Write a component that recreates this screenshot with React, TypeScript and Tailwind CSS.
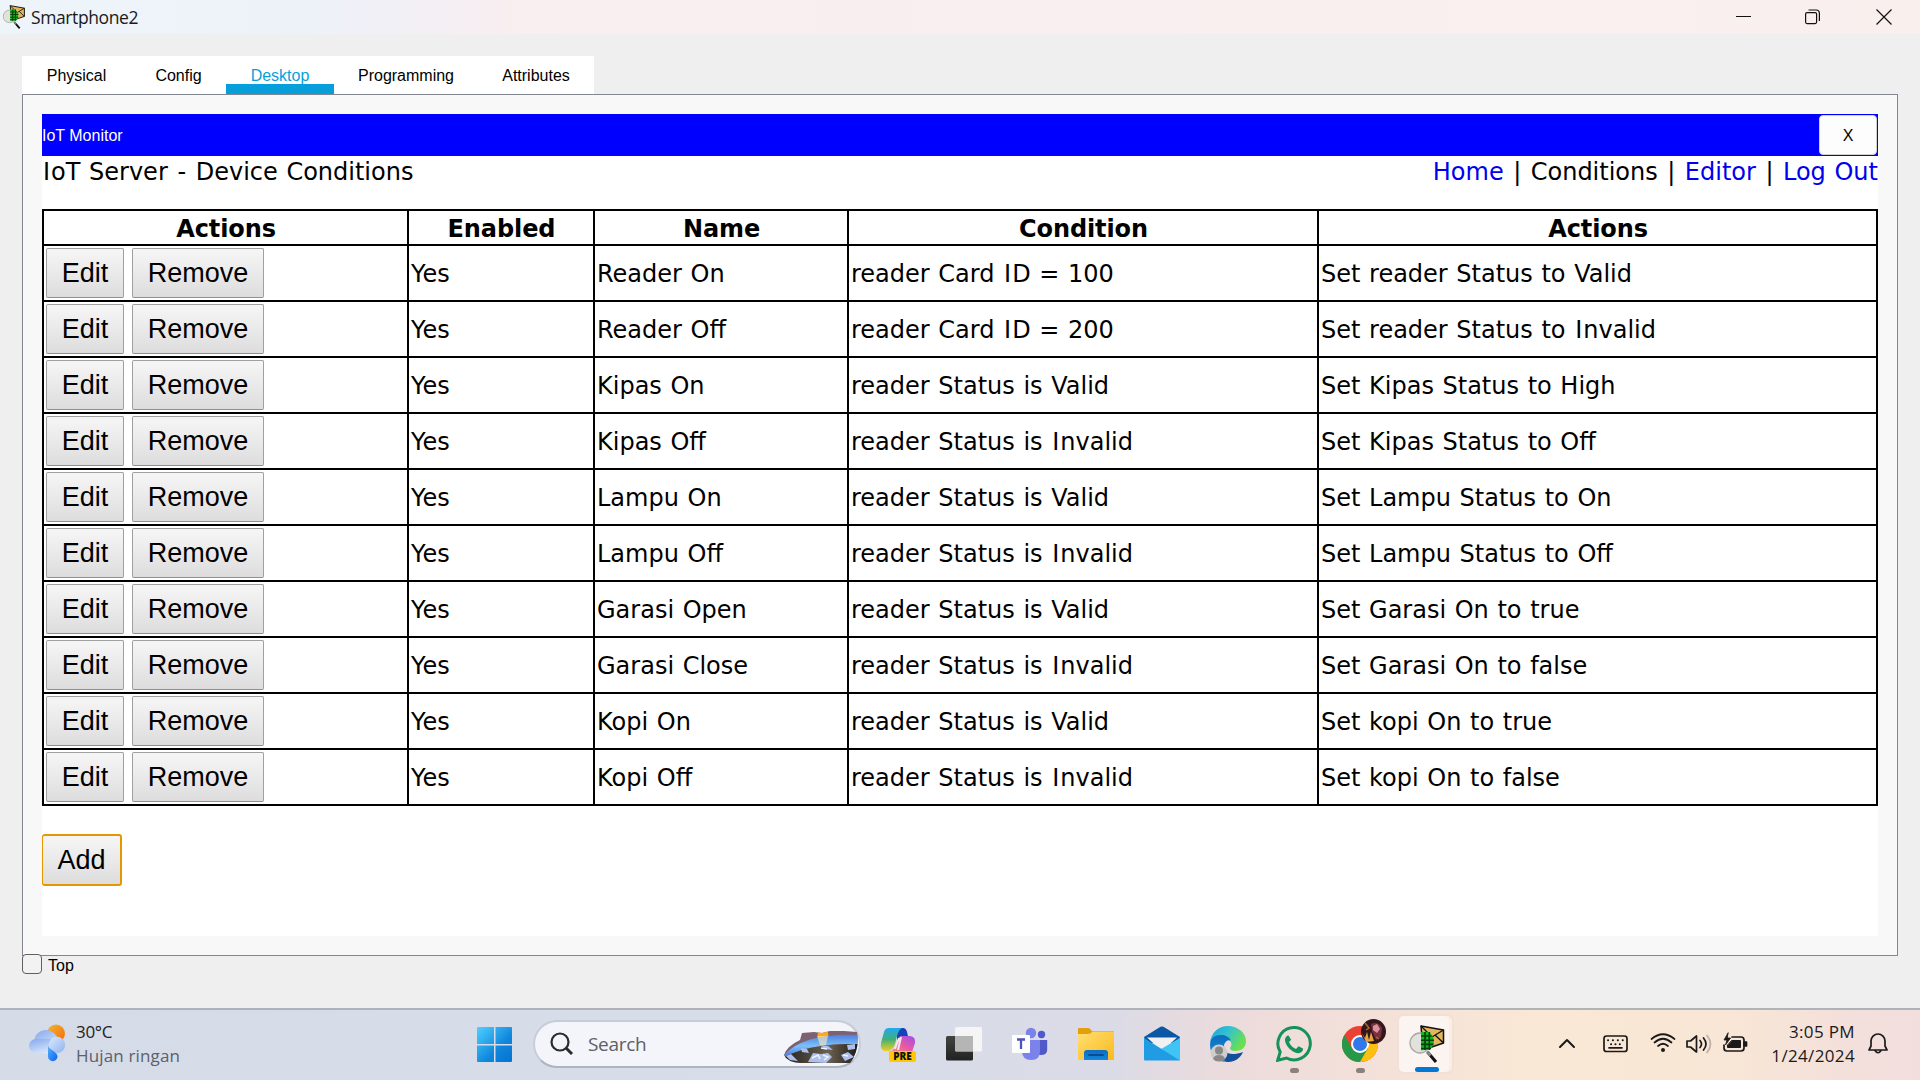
import React from 'react';

const rows = [
  ['Reader On', 'reader Card ID = 100', 'Set reader Status to Valid'],
  ['Reader Off', 'reader Card ID = 200', 'Set reader Status to Invalid'],
  ['Kipas On', 'reader Status is Valid', 'Set Kipas Status to High'],
  ['Kipas Off', 'reader Status is Invalid', 'Set Kipas Status to Off'],
  ['Lampu On', 'reader Status is Valid', 'Set Lampu Status to On'],
  ['Lampu Off', 'reader Status is Invalid', 'Set Lampu Status to Off'],
  ['Garasi Open', 'reader Status is Valid', 'Set Garasi On to true'],
  ['Garasi Close', 'reader Status is Invalid', 'Set Garasi On to false'],
  ['Kopi On', 'reader Status is Valid', 'Set kopi On to true'],
  ['Kopi Off', 'reader Status is Invalid', 'Set kopi On to false'],
];

const tabs = [
  { name: 'Physical', width: 'w-[109px]' },
  { name: 'Config', width: 'w-[95px]' },
  { name: 'Desktop', width: 'w-[108px]' },
  { name: 'Programming', width: 'w-[144px]' },
  { name: 'Attributes', width: 'w-[116px]' },
];

const webButton =
  'flex h-[50px] items-center justify-center rounded-[2px] border border-[#a0a0a0] border-b-[#8f8f8f] bg-linear-to-b from-[#f6f6f6] to-[#dddddd] font-["Liberation_Sans",sans-serif] text-[27px] leading-none text-black';

/* Text with slightly wider capital I, as in a screen face with slab I. */
function WideText({ text }: { text: string }) {
  return (
    <>
      {text.split(/(I|-)/).map((part, i) =>
        part === 'I' || part === '-' ? (
          <span key={i} className="px-[1px]">{part}</span>
        ) : (
          part
        ),
      )}
    </>
  );
}

function TracerIcon({ className }: { className: string }) {
  return (
    <svg viewBox="0 0 36 38" className={className}>
      <path d="M12 1 34.500 5V18L14 25Z" fill="#e2b45c" stroke="#111" strokeWidth="1.500" strokeLinejoin="round" />
      <path d="M12 1 23 12 34.500 5M34.500 18 26 10" fill="none" stroke="#111" strokeWidth="1.300" />
      <circle cx="11" cy="18" r="10" fill="#e3e1dc" stroke="#a8a8a4" strokeWidth="1.300" />
      <path d="M12 7H20Q26 12 24.500 19L22 24 12 25.500Z" fill="#14b51f" />
      <path d="M12 11H22.500M12 15.200H25M12 19.400H24.500M12 23.500H22M16 7V25M20.300 7V25" stroke="#033f08" strokeWidth="1.600" />
      <path d="m18.500 27 8.500 10" stroke="#111" strokeWidth="3" />
      <path d="m18 26.500 3.500 4" stroke="#888" strokeWidth="2.800" />
    </svg>
  );
}

function TitleBar() {
  return (
    <header className="flex h-[34px] shrink-0 items-center bg-[linear-gradient(to_right,#eef5f9_0%,#edf2f9_16%,#f3eff5_22%,#f9eef0_27%,#f9f0ee_100%)] pl-[2px]">
      <TracerIcon className="h-[24px] w-[24px]" />
      <span className='ml-[5px] pt-px font-["Open_Sans",sans-serif] text-[17.500px] tracking-[-0.400px] text-[#1a1a1a]'>Smartphone2</span>
      <div className="ml-auto flex items-center pr-[28px]">
        <svg viewBox="0 0 16 16" className="h-[16px] w-[16px]" fill="none" stroke="#111"><path d="M0 7.500H15" /></svg>
        <svg viewBox="0 0 16 16" className="ml-[53px] h-[16px] w-[16px]" fill="none" stroke="#111" strokeWidth="1.200">
          <rect x=".6" y="3.600" width="11" height="11" rx="1.500" />
          <path d="M3.500 1H11Q14.400 1 14.400 4.500V12" />
        </svg>
        <svg viewBox="0 0 16 16" className="ml-[55px] h-[16px] w-[16px]" fill="none" stroke="#111" strokeWidth="1.200"><path d="m.5.5 15 15m0-15-15 15" /></svg>
      </div>
    </header>
  );
}

function Monitor() {
  return (
    <main className="flex h-[862px] w-[1876px] flex-col border border-[#828790] bg-[#f8f8f8] px-[19px] pt-[19px]">
      <div className="flex h-[42px] items-center justify-between bg-[#0000ff] pr-px">
        <span className='pt-[2px] font-["Liberation_Sans",sans-serif] text-[16px] text-white'>IoT Monitor</span>
        <button className='flex h-[40px] w-[58px] items-center justify-center rounded-[4px] border border-[#d0d0d0] bg-[#fdfdfd] pt-[2px] font-["Liberation_Sans",sans-serif] text-[16px] text-black'>X</button>
      </div>
      <div className='h-[780px] bg-white font-["DejaVu_Sans",sans-serif] text-[24px] text-black [word-spacing:1px]'>
        <div className="flex h-[53px] justify-between leading-[33px]">
          <span><WideText text="IoT Server - Device Conditions" /></span>
          <nav className="flex gap-[9.500px]">
            <a className="text-[#0000ee]">Home</a><span>|</span><span>Conditions</span><span>|</span>
            <a className="text-[#0000ee]">Editor</a><span>|</span><a className="text-[#0000ee]">Log Out</a>
          </nav>
        </div>
        <table className="w-[1836px] table-fixed border-collapse border-2 border-black">
          <colgroup>
            <col className="w-[365px]" /><col className="w-[186px]" /><col className="w-[254px]" /><col className="w-[470px]" /><col />
          </colgroup>
          <thead>
            <tr className="h-[35px]">
              {['Actions', 'Enabled', 'Name', 'Condition', 'Actions'].map((h, i) => (
                <th key={i} className="border-2 border-black p-0 pt-[2px] pl-px leading-[30px] font-bold tracking-[-0.100px]">{h}</th>
              ))}
            </tr>
          </thead>
          <tbody>
            {rows.map((r) => (
              <tr key={r[0]} className="h-[56px]">
                <td className="border-2 border-black p-0 pl-[2px]">
                  <div className="flex gap-[8px]">
                    <button className={webButton + ' w-[78px]'}>Edit</button>
                    <button className={webButton + ' w-[132px]'}>Remove</button>
                  </div>
                </td>
                <td className="border-2 border-black p-0 pt-[2px] pl-[2px] leading-[30px]">Yes</td>
                {r.map((c) => (
                  <td key={c} className="border-2 border-black p-0 pt-[2px] pl-[2px] leading-[30px] whitespace-nowrap"><WideText text={c} /></td>
                ))}
              </tr>
            ))}
          </tbody>
        </table>
        <button className='mt-[28px] flex h-[52px] w-[80px] items-center justify-center rounded-[3px] border-2 border-l border-[#e59700] bg-linear-to-b from-[#f6f6f6] to-[#dddddd] font-["Liberation_Sans",sans-serif] text-[27px] leading-none'>Add</button>
      </div>
    </main>
  );
}

function WeatherIcon() {
  return (
    <svg viewBox="0 0 38 38" className="h-[38px] w-[38px]">
      <defs>
        <linearGradient id="sun" x2="1" y2="1"><stop stopColor="#f3b62c" /><stop offset="1" stopColor="#f36a0f" /></linearGradient>
        <linearGradient id="cloud" x2=".6" y2="1"><stop stopColor="#84a7ee" /><stop offset="1" stopColor="#dbe8fb" /></linearGradient>
        <linearGradient id="cloud2" x2="1" y2="1"><stop stopColor="#dce9fb" /><stop offset="1" stopColor="#8fb2f0" /></linearGradient>
        <linearGradient id="drop" x2="1" y2="1"><stop stopColor="#58b3fb" /><stop offset="1" stopColor="#0a62ef" /></linearGradient>
      </defs>
      <circle cx="28" cy="9.500" r="9" fill="url(#sun)" />
      <circle cx="18" cy="18" r="12" fill="url(#cloud)" />
      <rect x="1" y="15" width="30" height="14" rx="7" fill="url(#cloud)" />
      <circle cx="29" cy="21" r="8.200" fill="url(#cloud2)" />
      <path d="M20 22c2 4 9.500 6 9.500 10.500a4.700 4.700 0 0 1-9.500 0Z" fill="url(#drop)" />
    </svg>
  );
}

function SearchArt() {
  return (
    <svg viewBox="0 0 74 34" className="h-[34px] w-[74px]">
      <defs>
        <linearGradient id="lake" x2="0" y2="1"><stop stopColor="#4f7fe0" /><stop offset=".5" stopColor="#7cc0fa" /><stop offset="1" stopColor="#4776dd" /></linearGradient>
        <linearGradient id="shore" x2="1"><stop stopColor="#25221f" /><stop offset=".6" stopColor="#6b6150" /><stop offset="1" stopColor="#1d1a18" /></linearGradient>
        <clipPath id="artClip"><path d="M0 25Q3 16 16 10L18 3 30 2 38 3 46 1 60 1 73 2Q76 20 66 33H17Q3 32 0 25Z" /></clipPath>
      </defs>
      <g clipPath="url(#artClip)">
        <rect width="74" height="34" fill="#7c6172" />
        <circle cx="39" cy="5" r="5.500" fill="#ffa818" />
        <path d="M0 25Q20 3 74 5V14Q28 13 0 27Z" fill="url(#lake)" />
        <path d="M33 6h11l-2 9h-6Z" fill="#ffeebd" opacity=".6" />
        <path d="M0 27Q28 13 74 14V34H0Z" fill="url(#shore)" />
        <path d="m2 26 5-2 7 7-8-1Zm15-8 6 1 2 4-7-1Zm7 14 5-9 8 1 7-1 4 4-6 6Zm12-17 8 1 5 4-8-1Zm21 10 7-3 6 5-9 4Zm6-10 8-1v5l-7 1Z" fill="#aebfec" />
        <path d="m28 28 6-3 2 4m3-4 5 2-4 3m19-5 5 1M37 18l6 1" stroke="#f0f4ff" strokeWidth="1.500" fill="none" />
      </g>
    </svg>
  );
}

function CopilotIcon() {
  return (
    <svg viewBox="0 0 36 36" className="h-[36px] w-[36px]">
      <defs>
        <linearGradient id="cpA" x2="0" y2="1"><stop stopColor="#21a9ee" /><stop offset=".5" stopColor="#42b078" /><stop offset="1" stopColor="#f1cf1d" /></linearGradient>
        <linearGradient id="cpB" x1="1" x2="0" y2="1"><stop stopColor="#9b50ee" /><stop offset=".5" stopColor="#e758a5" /><stop offset="1" stopColor="#ff9264" /></linearGradient>
      </defs>
      <path d="M17 1H23Q26 1 27 5L28 9H23Q20 9 19 12L17 18Z" fill="#1740bd" />
      <path d="M9 1H22Q19 2 17 9L15 17Q13 23 8 24H4Q0 22 1 16L4 5Q5 1 9 1Z" fill="url(#cpA)" />
      <path d="M22 9H30Q36 10 35 16L32 25H8Q14 24 16 18L18 12Q19 9 22 9Z" fill="url(#cpB)" />
      <path d="M19 11 15 22M21 10 18 23" stroke="#f3e9ed" strokeWidth="2" />
      <rect x="9" y="24" width="27" height="11" rx="2.500" fill="#ffc800" />
      <text x="22.500" y="33" textAnchor="middle" fontFamily="Open Sans, sans-serif" fontSize="10" fontWeight="800" fill="#111">PRE</text>
    </svg>
  );
}

function TaskViewIcon() {
  return (
    <svg viewBox="0 0 36 36" className="h-[36px] w-[36px]">
      <defs>
        <linearGradient id="tvD" x2="0" y2="1"><stop stopColor="#434341" /><stop offset="1" stopColor="#222" /></linearGradient>
      </defs>
      <rect y="10" width="27" height="24.500" rx="1.500" fill="url(#tvD)" />
      <rect x="9" y="1" width="27" height="24.500" rx="1.500" fill="#f5f5f6" />
      <path d="M9 10H27V25H9Z" fill="#b5b5b5" />
    </svg>
  );
}

function TeamsIcon() {
  return (
    <svg viewBox="0 0 36 36" className="h-[36px] w-[36px]">
      <circle cx="29.500" cy="8.500" r="3.700" fill="#5059c9" />
      <circle cx="19" cy="7" r="5.200" fill="#7b83eb" />
      <path d="M26 14H35.200V24Q35 29 29 29 24 29 24 24Z" fill="#5059c9" />
      <path d="M10 14H28V25Q28 34 19.500 34 10 34 10 25Z" fill="#7b83eb" />
      <rect y="9" width="18" height="18" rx="1" fill="#fff" />
      <path d="M5 13.500H13M9 13.500V23" stroke="#4b53bc" strokeWidth="2.300" />
    </svg>
  );
}

function FolderIcon() {
  return (
    <svg viewBox="0 0 36 36" className="h-[36px] w-[36px]">
      <defs>
        <linearGradient id="fo" x2="1" y2="1"><stop stopColor="#ffdf74" /><stop offset="1" stopColor="#fbb91b" /></linearGradient>
        <linearGradient id="fb" x2="0" y2="1"><stop stopColor="#0f6cc4" /><stop offset="1" stopColor="#1187db" /></linearGradient>
      </defs>
      <path d="M0 3Q0 2 1 2H10Q12 2 13 4L14 5H35Q36 5 36 6V12H0Z" fill="#e3a008" />
      <path d="M0 8H10Q12 8 13 7L14.500 5.600H36V33Q36 34 35 34H1Q0 34 0 33Z" fill="url(#fo)" />
      <path d="M6 34V27Q6 24 9 24H27Q30 24 30 27V34Z" fill="url(#fb)" />
      <path d="M11 29H25" stroke="#0b4b91" strokeWidth="1.800" strokeLinecap="round" />
    </svg>
  );
}

function MailIcon() {
  return (
    <svg viewBox="0 0 36 36" className="h-[36px] w-[36px]">
      <path d="M0 11 16.500.8Q18 0 19.500.8L36 11 34 17H2Z" fill="#0a58a5" />
      <path d="M3 11.500H33L18 25Z" fill="#f1f1f1" />
      <path d="M36 12V33.500Q36 34.500 35 34.500L17 23Z" fill="#3fc5f5" />
      <path d="M0 12 36 34.500H1Q0 34.500 0 33.500Z" fill="#1f9ce4" />
    </svg>
  );
}

function EdgeIcon() {
  return (
    <svg viewBox="0 0 36 36" className="h-[36px] w-[36px]">
      <defs>
        <linearGradient id="eA" x2="1" y2=".5"><stop stopColor="#1a9fe0" /><stop offset=".5" stopColor="#35c2cf" /><stop offset="1" stopColor="#6be04d" /></linearGradient>
        <linearGradient id="eB" x2="0" y2="1"><stop stopColor="#0b6cba" /><stop offset="1" stopColor="#1d97e5" /></linearGradient>
      </defs>
      <path d="M0 17C1 7 8 0 18 0 28 0 36 7 36 15 36 22 31 25 25 25 22 25 20 24 20 22 22 20 22 17 20 15Q13 8 0 17Z" fill="url(#eA)" />
      <path d="M0 18Q1 9 11 9 18 9 21 14.500 16 13 14 19 13 31 29 28 24 36 18 36 0 36 0 18Z" fill="url(#eB)" />
      <path d="M14 19C12 26 19 31 33 26 30 33 24 36 17 36 10 33 8 23 14 19Z" fill="#124f9b" />
      <circle cx="9" cy="27" r="8.500" fill="#cfcdca" />
      <circle cx="9" cy="24.500" r="4" fill="#8a8886" />
      <path d="M3 33Q4 29 9 29T15 33Q13 35.500 9 35.500T3 33Z" fill="#8a8886" />
    </svg>
  );
}

function WhatsAppIcon() {
  return (
    <svg viewBox="0 0 36 36" className="h-[36px] w-[36px]">
      <path d="M1.700 34.300 4.200 26A16.200 16.200 0 1 1 10.500 32Z" fill="none" stroke="#17915a" strokeWidth="3" />
      <path d="M12.500 9.500C11 9.500 8.800 11.500 9 14.500 9.500 20 16 26.500 22 27.200 25 27.400 27.300 25 27 22.500L22.500 20.300 20 23Q15 21 13 16L15.200 13.800Z" fill="#17915a" />
    </svg>
  );
}

function ChromeIcon() {
  return (
    <svg viewBox="0 0 44 44" className="h-[44px] w-[44px]">
      <circle cx="18" cy="25" r="18" fill="#eb4132" />
      <path d="M2.400 16A18 18 0 0 0 18 43L26 29.500 10.200 29.500Z" fill="#279847" />
      <path d="M33.600 16A18 18 0 0 1 18 43L25.800 29.500 18 16Z" fill="#fdc010" />
      <circle cx="18" cy="25" r="9" fill="#fff" />
      <circle cx="18" cy="25" r="7" fill="#3278ea" />
      <circle cx="31.500" cy="12.500" r="12.500" fill="#33161c" />
      <path d="M29 5q7-3 11 4l-1 9-5 3-4-9Z" fill="#7a3040" />
      <path d="m31 7 4-2 3 5-3 4-4-3Z" fill="#d7959b" />
      <path d="m20 14 3 5 2-6 2 8 2-8 3 9-8 1Z" fill="#e8a43c" />
      <path d="m23 4 4 5-3 2M34 18l3 2" stroke="#a86a35" strokeWidth="1.500" fill="none" />
    </svg>
  );
}

function Taskbar() {
  return (
    <footer className='flex h-[72px] shrink-0 border-t-2 border-[#a9adb6]/90 bg-[linear-gradient(to_right,#d5dce8_0%,#d7dde9_45%,#dbdbe6_58%,#ecdbdc_64%,#f3e0d9_71%,#f9e8d5_80%,#f8e6d6_90%,#f3dfdb_97%,#f2dedd_100%)] font-["Open_Sans",sans-serif] text-[17px]'>
      <div className="flex w-[477px] gap-[10px] pl-[28px]">
        <div className="pt-[14px]"><WeatherIcon /></div>
        <div className="pt-[10px] leading-[24px]">
          <div className="tracking-[-0.300px] text-[#222]">30°C</div>
          <div className="tracking-[0.150px] text-[#5c6068]">Hujan ringan</div>
        </div>
      </div>
      <svg viewBox="0 0 36 36" className="mt-[17px] h-[36px] w-[36px]">
        <defs><linearGradient id="win" gradientUnits="userSpaceOnUse" x1="0" y1="0" x2="36" y2="36"><stop stopColor="#4fd0ff" /><stop offset=".6" stopColor="#0f86dc" /><stop offset="1" stopColor="#0572cf" /></linearGradient></defs>
        <path d="M1 0H17V17H0V1Q0 0 1 0ZM18.500 0H34Q35 0 35 1V17H18.500ZM0 18.500H17V35H1Q0 35 0 34ZM18.500 18.500H35V34Q35 35 34 35H18.500Z" fill="url(#win)" />
      </svg>
      <div className="mt-[10px] ml-[20px] flex h-[48px] w-[328px] items-center rounded-full border-2 border-[#c6ccd8] border-b-[#adb3bf] bg-[#f3f5fa] pl-[15px]">
        <svg viewBox="0 0 24 24" className="h-[24px] w-[24px]" fill="none" stroke="#2b2b2b" strokeWidth="2.200"><circle cx="10" cy="10" r="8.500" /><path d="m16 16 6 6" strokeWidth="3" /></svg>
        <span className="ml-[14px] text-[19px] tracking-[-0.300px] text-[#5e6064]">Search</span>
        <div className="ml-auto pt-[5px] pr-px"><SearchArt /></div>
      </div>
      <div className="ml-[19px] flex pt-[16px]">
        <div className="w-[66px] pt-px"><CopilotIcon /></div>
        <div className="w-[66px]"><TaskViewIcon /></div>
        <div className="w-[66px]"><TeamsIcon /></div>
        <div className="w-[66px]"><FolderIcon /></div>
        <div className="w-[66px]"><MailIcon /></div>
        <div className="w-[66px]"><EdgeIcon /></div>
        <div className="w-[66px]"><WhatsAppIcon /><div className="mt-[6px] ml-[14px] h-[5px] w-[9px] rounded-full bg-[#8b807d]" /></div>
        <div className="-mt-[7px] w-[55px]"><ChromeIcon /><div className="mt-[5px] ml-[14px] h-[5px] w-[9px] rounded-full bg-[#8b807d]" /></div>
      </div>
      <div className="mt-[4px] h-[60px] w-[57px] rounded-[7px] border-2 border-[#f2e0d6] bg-[#faeee5]">
        <div className="flex h-[56px] w-[50px] flex-col items-center rounded-[5px] bg-[#fbf4f0] pt-[9px] pl-[5px]">
          <TracerIcon className="h-[38px] w-[36px]" />
          <div className="mt-[4px] h-[5px] w-[24px] rounded-full bg-[#0078d4]" />
        </div>
      </div>
      <div className="ml-auto flex pr-[32px] text-[#1a1a1a]">
        <svg viewBox="0 0 200 70" className="h-[70px] w-[200px]" fill="none" stroke="#1a1a1a" strokeWidth="1.700" strokeLinecap="round" strokeLinejoin="round">
          <path d="m8 37 7-7 7 7" strokeWidth="2" />
          <rect x="52" y="26" width="23" height="15.500" rx="2.500" />
          <path d="M57 37.800H70" />
          <path d="M56 30.300h.1m4.800 0h.1m4.800 0h.1m4.800 0h.1M59 34.200h.1m4.300 0h.1m4.300 0h.1" strokeWidth="2" />
          <g transform="translate(-1)">
            <circle cx="112" cy="40" r="2" fill="#1a1a1a" stroke="none" />
            <path d="M107 36q5-4.500 10 0M103.500 32.500q8.500-7.500 17 0M100.500 29q11.500-9.500 23 0" />
          </g>
          <g transform="translate(-2)">
            <path d="M137 31h3.500l6-5v16l-6-5H137Z" />
            <path d="M150 30.500q3 3.500 0 7M153.500 28q5 6 0 12" />
            <path d="M157 25.500q7 8.500 0 17" stroke="#bfb0a6" />
          </g>
          <g transform="translate(-1)">
            <path d="M181 27h9q3 0 3 3v8q0 3-3 3h-14q-3 0-3-3v-3" />
            <path d="M181 30.500h8.500v7h-13v-2Z" fill="#1a1a1a" strokeWidth="1" />
            <path d="M193 32h2.500v4H193Z" fill="#1a1a1a" />
            <path d="m177 23-4 7h3l-1.500 5 5-7h-3Z" fill="#1a1a1a" strokeWidth=".8" />
          </g>
        </svg>
        <div className="ml-[13px] w-[90px] pt-[10px] text-right leading-[24px] tracking-[0.350px]">
          <div>3:05 PM</div>
          <div>1/24/2024</div>
        </div>
        <svg viewBox="0 0 20 24" className="mt-[22px] ml-[13px] h-[24px] w-[20px]" fill="none" stroke="#1a1a1a" strokeWidth="1.700" strokeLinejoin="round">
          <path d="M3 9a7 7 0 0 1 14 0v5l2 4H1l2-4ZM7 18.500q3 4.500 6 0" />
        </svg>
      </div>
    </footer>
  );
}

export default function App() {
  return (
    <div className="flex h-[1080px] w-[1920px] flex-col overflow-hidden bg-[#efefef]">
      <TitleBar />
      <div className="flex grow flex-col pt-[22px] pl-[22px]">
        <div className='flex h-[38px] w-[572px] bg-white font-["Liberation_Sans",sans-serif] text-[16px]'>
          {tabs.map((t) => (
            <div key={t.name} className={t.width + ' flex flex-col items-center ' + (t.name === 'Desktop' ? 'border-b-[10px] border-[#079fdb] text-[#079fdb]' : 'text-black')}>
              <span className="mt-[11px] leading-[18px]">{t.name}</span>
            </div>
          ))}
        </div>
        <Monitor />
        <label className='relative -top-[2px] flex items-center gap-[6px] font-["Liberation_Sans",sans-serif] text-[16px]'>
          <span className="relative -top-[2px] h-[20px] w-[20px] rounded-[4px] border border-[#5f5f5f] bg-[#f2f2f2]" />
          Top
        </label>
      </div>
      <Taskbar />
    </div>
  );
}
